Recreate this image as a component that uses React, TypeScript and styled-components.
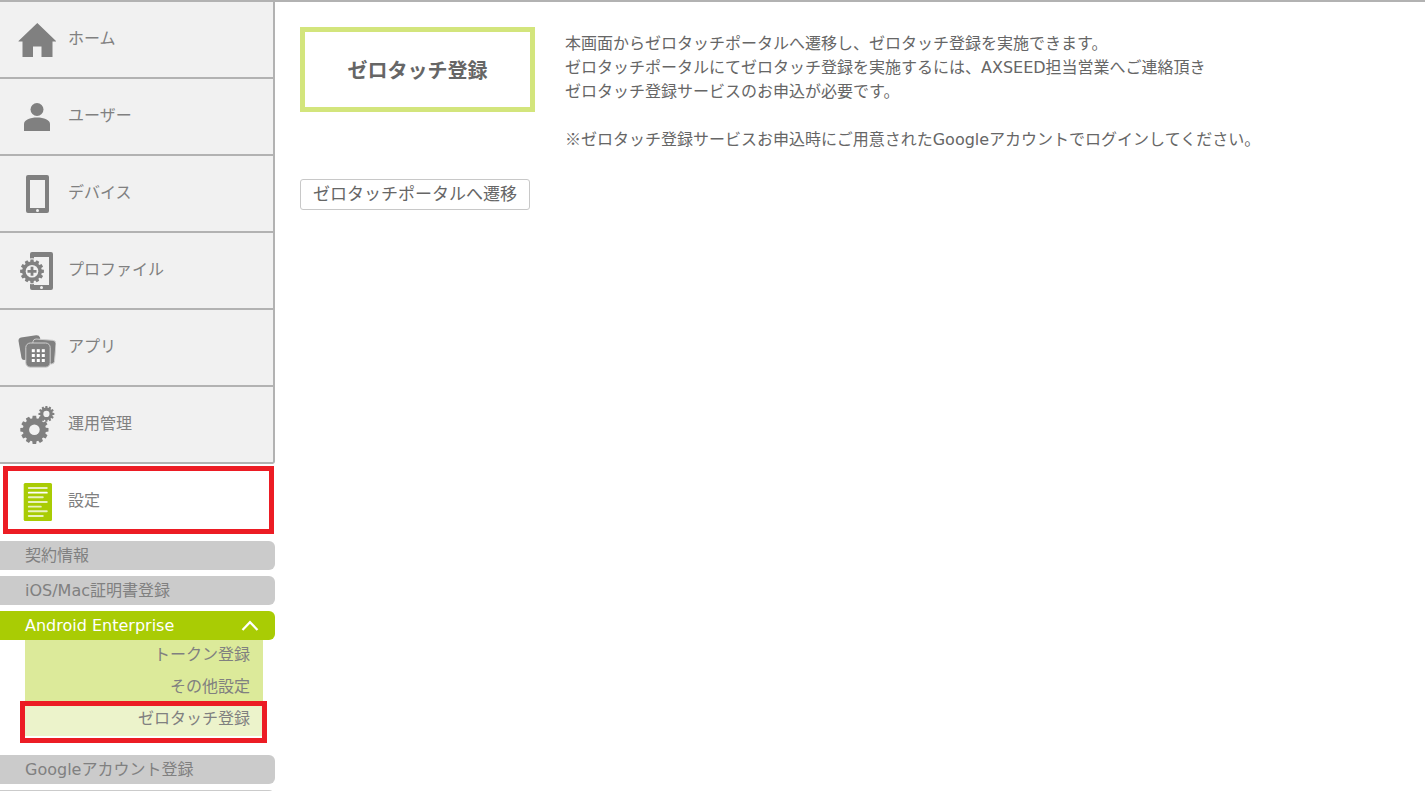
import React from "react";
import styled, { createGlobalStyle, css } from "styled-components";

const color = {
  rule: "#b2b2b2",
  panel: "#f1f1f1",
  text: "#808080",
  body: "#666666",
  bar: "#cbcbcb",
  lime: "#a9cc04",
  limeSoft: "#dcea9a",
  limePale: "#ecf3cb",
  limeBorder: "#d3e57c",
  mark: "#ec1c24",
};

const GlobalStyle = createGlobalStyle`
  *, *::before, *::after { box-sizing: border-box; }
  body {
    margin: 0;
    background: #fff;
    color: ${color.body};
    font-family: "DejaVu Sans", "Noto Sans CJK JP", sans-serif;
    font-size: 16px;
    line-height: 24px;
  }
`;

const Shell = styled.div`
  display: flex;
  align-items: flex-start;
  height: 100vh;
  overflow: hidden;
  border-top: 2px solid ${color.rule};
`;

const Sidebar = styled.nav`
  flex: 0 0 275px;
`;

const List = styled.ul`
  margin: 0;
  padding: 0;
  list-style: none;
`;

const MainMenu = styled(List)`
  border-right: 2px solid ${color.rule};
  border-bottom-right-radius: 3px;
  background: ${color.panel};
`;

/* Red frame drawn over the part of the menu being pointed out. */
const marked = css`
  position: relative;
  &::after {
    content: "";
    position: absolute;
    border: 5px solid ${color.mark};
    pointer-events: none;
  }
`;

const MenuLink = styled.a<{ $current?: boolean }>`
  display: flex;
  align-items: flex-start;
  gap: 12px;
  height: 77px;
  padding: 18px 16px;
  border-bottom: 2px solid ${(p) => (p.$current ? "transparent" : color.rule)};
  color: ${color.text};
  text-decoration: none;
  line-height: 38px;
  ${(p) =>
    p.$current &&
    css`
      ${marked}
      &::after {
        inset: 2px 1px 5px 3px;
      }
    `}
`;

const Icon = styled.svg<{ $accent?: boolean }>`
  flex: none;
  width: 40px;
  height: 40px;
  fill: ${(p) => (p.$accent ? color.lime : color.text)};
`;

const SubMenu = styled(List)`
  display: flex;
  flex-direction: column;
  gap: 6px;
`;

const SubBar = styled.a<{ $open?: boolean }>`
  display: flex;
  align-items: center;
  justify-content: space-between;
  height: 29px;
  padding: 0 16px 0 25px;
  border-radius: 0 6px 6px 0;
  background: ${(p) => (p.$open ? color.lime : color.bar)};
  color: ${(p) => (p.$open ? "#fff" : color.text)};
  text-decoration: none;
`;

const Chevron = styled.svg`
  width: 18px;
  height: 12px;
  fill: none;
  stroke: #fff;
  stroke-width: 2.2;
`;

const Nested = styled(List)`
  margin: 0 12px 13px 25px;
`;

const NestedLink = styled.a<{ $current?: boolean }>`
  display: block;
  height: 32px;
  padding-right: 13px;
  background: ${(p) => (p.$current ? color.limePale : color.limeSoft)};
  color: ${color.text};
  line-height: 30px;
  text-align: right;
  text-decoration: none;
  ${(p) =>
    p.$current &&
    css`
      ${marked}
      &::after {
        inset: -3px -4px -7px -5px;
      }
    `}
`;

const Main = styled.main`
  flex: 1;
  min-width: 0;
  padding: 25px;
`;

const Intro = styled.section`
  display: grid;
  grid-template-columns: 235px 1fr;
  column-gap: 30px;
  align-items: start;
  margin-bottom: 27px;
`;

const Title = styled.h1`
  margin: 0;
  padding: 24px 10px 21px;
  border: 5px solid ${color.limeBorder};
  font-size: 20px;
  line-height: 30px;
  text-align: center;
`;

const Description = styled.div`
  padding-top: 5px;
`;

const Paragraph = styled.p`
  margin: 0 0 24px;
  &:last-child {
    margin-bottom: 0;
  }
`;

/* The reference mark takes the full-width glyph of the Japanese font. */
const NoteMark = styled.span`
  font-family: "Noto Sans CJK JP", sans-serif;
  line-height: 1;
`;

const PortalButton = styled.button`
  height: 31px;
  padding: 0 12px 2px;
  border: 1px solid #c8c8c8;
  border-radius: 3px;
  background: #fff;
  color: ${color.body};
  font-family: inherit;
  font-size: 17px;
  line-height: 24px;
  cursor: pointer;
`;

/* Outline of a cog: short teeth spaced evenly round a disc. */
function gear(cx: number, cy: number, outer: number, inner: number, teeth: number) {
  const step = (Math.PI * 2) / teeth;
  const pts: string[] = [];
  for (let i = 0; i < teeth; i++) {
    const a = i * step - Math.PI / 2;
    const corners: [number, number][] = [
      [-0.36, inner],
      [-0.24, outer],
      [0.24, outer],
      [0.36, inner],
    ];
    corners.forEach(([k, r]) => {
      pts.push(
        `${(cx + Math.cos(a + k * step) * r).toFixed(2)} ${(cy + Math.sin(a + k * step) * r).toFixed(2)}`
      );
    });
  }
  return `M${pts.join("L")}Z`;
}

const icons = {
  home: <path d="M21.300 3 40 21v.5h-3.500V37H25.500V26.500h-8.500V37H6.500V21.500H2.500V21Z" />,
  user: (
    <>
      <circle cx="21" cy="12.500" r="6.500" />
      <path d="M8 34v-7c0-4 6-6.500 13-6.500S34 23 34 27v7Z" />
    </>
  ),
  device: (
    <>
      <path
        fillRule="evenodd"
        d="M12 1h19a2 2 0 0 1 2 2v34a2 2 0 0 1-2 2H12a2 2 0 0 1-2-2V3a2 2 0 0 1 2-2ZM14 6v28h15V6Z"
      />
      <circle cx="21.500" cy="36.500" r="1.500" fill={color.panel} />
    </>
  ),
  profile: (
    <>
      <path
        fillRule="evenodd"
        d="M16 1h19a2 2 0 0 1 2 2v34a2 2 0 0 1-2 2H16a2 2 0 0 1-2-2V3a2 2 0 0 1 2-2ZM18 6v28h15V6Z"
      />
      <circle cx="25.500" cy="36.500" r="1.500" fill={color.panel} />
      <circle cx="16" cy="20.300" r="13" fill={color.panel} />
      <path d={gear(16, 20.3, 12, 9.8, 12)} />
      <circle cx="16" cy="20.300" r="6.300" fill={color.panel} />
      <path d="M14.600 15.800h2.800v3.100h3.100v2.800h-3.100v3.100h-2.800v-3.100h-3.100v-2.800h3.100Z" />
    </>
  ),
  apps: (
    <>
      <path d="M5 9.500 20 7.200q3-.4 4 2.300L27 29 8 32q-2 0-2.500-2L2.500 13q-.2-3 2.500-3.500Z" />
      <path
        stroke="#cfcfcf"
        d="M20 11 37 12.300q3 .5 3 3.500L38.500 33.500q-.5 2.500-3 2.500L15 32l2-18.500q.5-2.500 3-2.500Z"
      />
      <rect x="9.800" y="15" width="24.400" height="24.200" rx="4.500" stroke="#cfcfcf" />
      <g fill="#fff">
        {[21.2, 26, 31].map((y) =>
          [15.8, 20.8, 25.8].map((x) => <rect key={`${x}-${y}`} x={x} y={y} width="3" height="3" />)
        )}
      </g>
    </>
  ),
  operation: (
    <>
      <path d={gear(18.4, 24.8, 14.2, 11.6, 12)} />
      <circle cx="18.400" cy="24.800" r="5.300" fill={color.panel} />
      <path d={gear(30.4, 8.9, 8, 6.3, 12)} />
      <circle cx="30.400" cy="8.900" r="3.100" fill={color.panel} />
    </>
  ),
  settings: (
    <>
      <rect x="7.700" y="1" width="28.300" height="38" rx="1.500" />
      <g stroke="#fff" strokeWidth="1.900" strokeLinecap="round">
        {[19, 19, 15, 19, 13, 19, 15].map((w, i) => (
          <path key={i} strokeOpacity={i === 1 ? 1 : 0.75} d={`M12.800 ${6 + i * 4.66}h${w - 1}`} />
        ))}
      </g>
    </>
  ),
};

const menu: { label: string; icon: keyof typeof icons }[] = [
  { label: "ホーム", icon: "home" },
  { label: "ユーザー", icon: "user" },
  { label: "デバイス", icon: "device" },
  { label: "プロファイル", icon: "profile" },
  { label: "アプリ", icon: "apps" },
  { label: "運用管理", icon: "operation" },
];

export default function App() {
  return (
    <>
      <GlobalStyle />
      <Shell>
        <Sidebar>
          <MainMenu>
            {menu.map((m) => (
              <li key={m.label}>
                <MenuLink href="#">
                  <Icon viewBox="0 0 40 40" aria-hidden="true">
                    {icons[m.icon]}
                  </Icon>
                  {m.label}
                </MenuLink>
              </li>
            ))}
          </MainMenu>
          <MenuLink href="#" $current>
            <Icon viewBox="0 0 40 40" aria-hidden="true" $accent>
              {icons.settings}
            </Icon>
            設定
          </MenuLink>
          <SubMenu>
            <li>
              <SubBar href="#">契約情報</SubBar>
            </li>
            <li>
              <SubBar href="#">iOS/Mac証明書登録</SubBar>
            </li>
            <li>
              <SubBar href="#" $open>
                Android Enterprise
                <Chevron viewBox="0 0 18 12" aria-hidden="true">
                  <path d="M1.500 10 9 2.200l7.500 7.800" />
                </Chevron>
              </SubBar>
              <Nested>
                <li>
                  <NestedLink href="#">トークン登録</NestedLink>
                </li>
                <li>
                  <NestedLink href="#">その他設定</NestedLink>
                </li>
                <li>
                  <NestedLink href="#" $current>
                    ゼロタッチ登録
                  </NestedLink>
                </li>
              </Nested>
            </li>
            <li>
              <SubBar href="#">Googleアカウント登録</SubBar>
            </li>
            <li aria-hidden="true">
              <SubBar as="div" />
            </li>
          </SubMenu>
        </Sidebar>
        <Main>
          <Intro>
            <Title>ゼロタッチ登録</Title>
            <Description>
              <Paragraph>
                本画面からゼロタッチポータルへ遷移し、ゼロタッチ登録を実施できます。
                <br />
                ゼロタッチポータルにてゼロタッチ登録を実施するには、AXSEED担当営業へご連絡頂き
                <br />
                ゼロタッチ登録サービスのお申込が必要です。
              </Paragraph>
              <Paragraph>
                <NoteMark>※</NoteMark>
                ゼロタッチ登録サービスお申込時にご用意されたGoogleアカウントでログインしてください。
              </Paragraph>
            </Description>
          </Intro>
          <PortalButton type="button">ゼロタッチポータルへ遷移</PortalButton>
        </Main>
      </Shell>
    </>
  );
}
